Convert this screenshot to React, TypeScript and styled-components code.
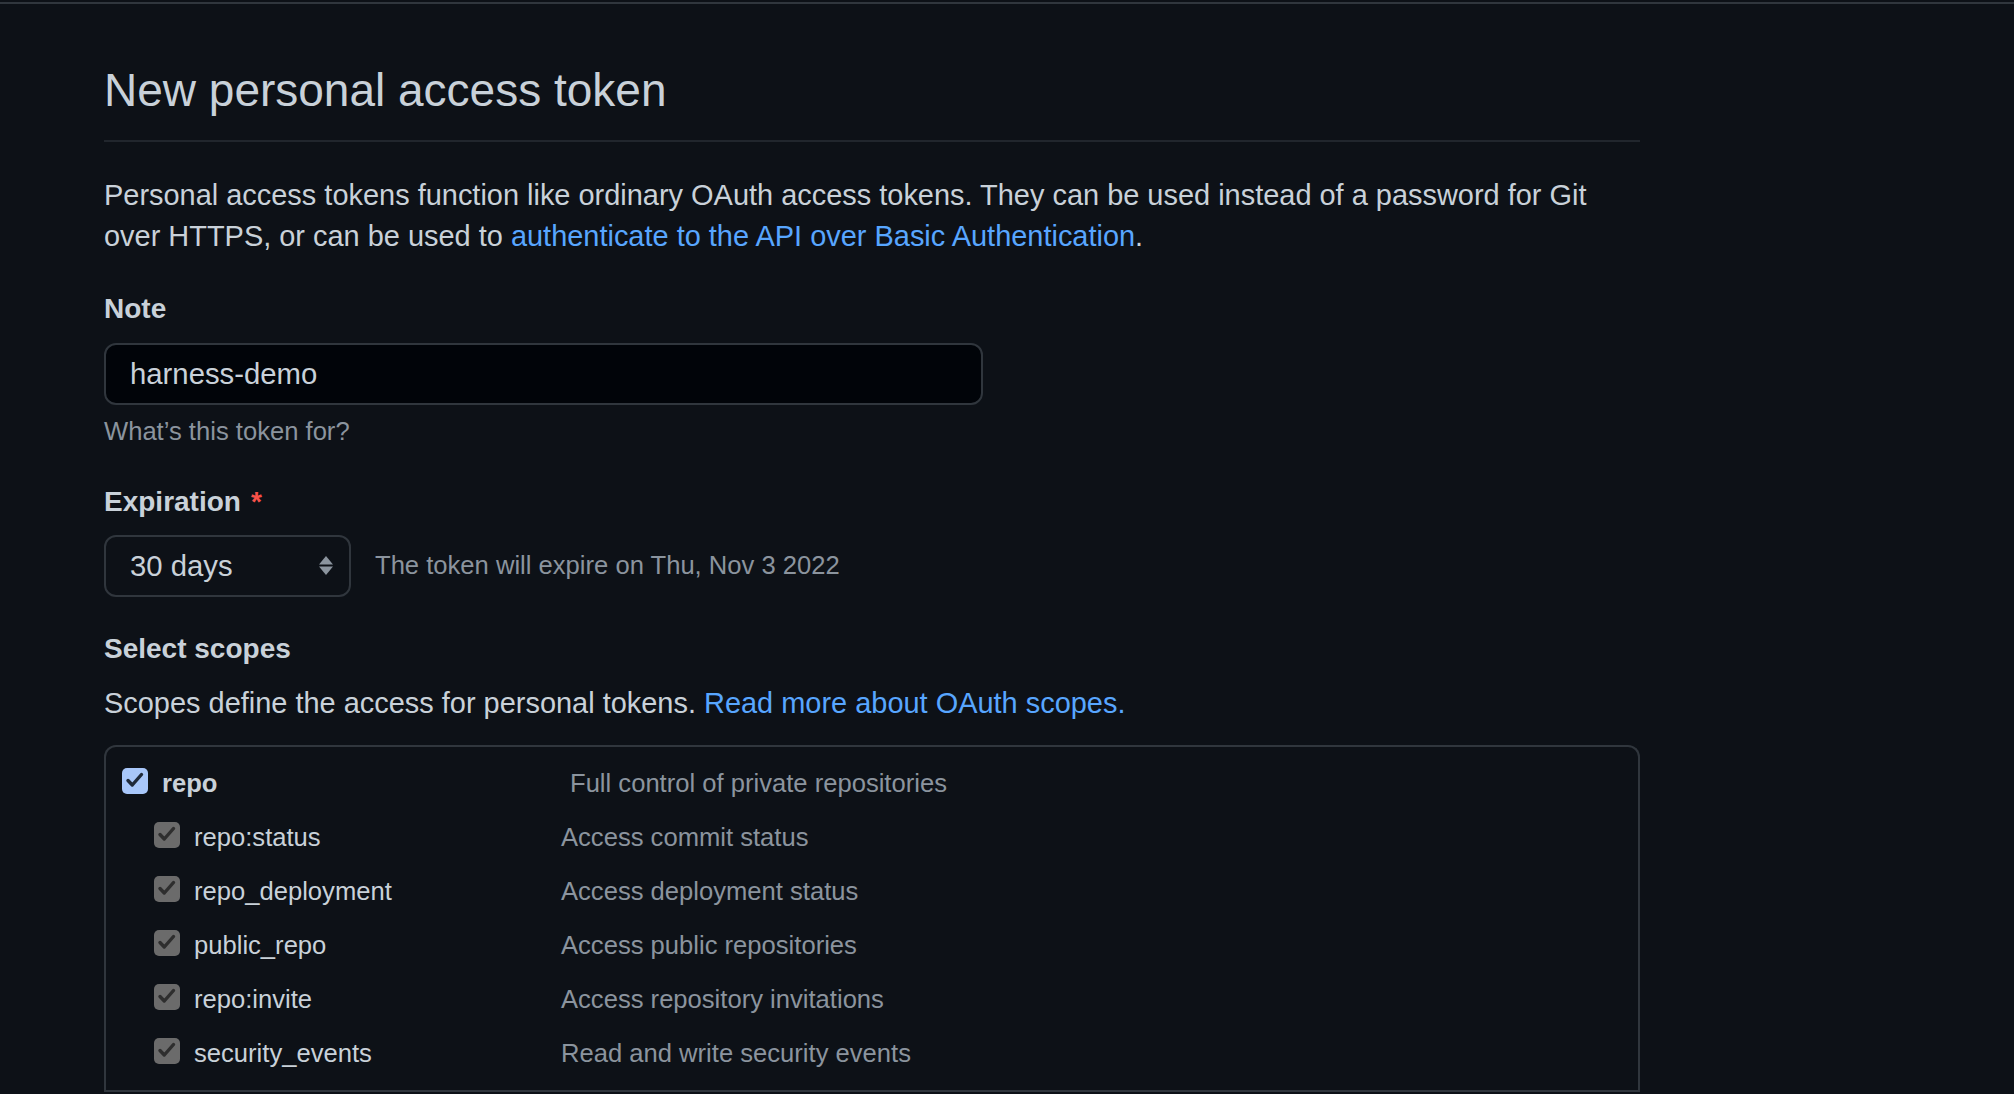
import React, { FC } from "react";
import styled, { createGlobalStyle } from "styled-components";

type Scope = {
  name: string;
  description: string;
  nested?: boolean;
};

const scopes: Scope[] = [
  { name: "repo", description: "Full control of private repositories" },
  { name: "repo:status", description: "Access commit status", nested: true },
  { name: "repo_deployment", description: "Access deployment status", nested: true },
  { name: "public_repo", description: "Access public repositories", nested: true },
  { name: "repo:invite", description: "Access repository invitations", nested: true },
  { name: "security_events", description: "Read and write security events", nested: true }
];

const GlobalStyle = createGlobalStyle`
  html, body {
    margin: 0;
    padding: 0;
    background: #0d1117;
  }
  body {
    font-family: "Liberation Sans", Arial, sans-serif;
    color: #c9d1d9;
  }
`;

const Page = styled.div`
  min-height: 1094px;
  background: #0d1117;
  overflow: hidden;
`;

const TopRule = styled.div`
  height: 2px;
  margin-top: 2px;
  background: #30363d;
`;

const Container = styled.main`
  width: 1536px;
  margin-left: 104px;
`;

const Subhead = styled.div`
  padding-top: 58px;
  padding-bottom: 20px;
  border-bottom: 2px solid #21262d;
`;

const Heading = styled.h1`
  margin: 0;
  font-size: 46px;
  font-weight: 400;
  line-height: 57.5px;
  color: #c9d1d9;
`;

const Lead = styled.p<{ $gap: number }>`
  margin: ${p => p.$gap}px 0 0;
  font-size: 28.95px;
  line-height: 41.7px;
  color: #c9d1d9;
`;

const Link = styled.span`
  color: #58a6ff;
`;

const Label = styled.div<{ $gap?: number }>`
  margin-top: ${p => p.$gap ?? 31}px;
  font-size: 28px;
  font-weight: 700;
  line-height: 41px;
  color: #c9d1d9;
`;

const Required = styled.span`
  margin-left: 10px;
  color: #f85149;
`;

const TextInput = styled.div`
  box-sizing: border-box;
  display: flex;
  align-items: center;
  width: 879px;
  height: 62px;
  margin-top: 14px;
  padding-left: 24px;
  border: 2px solid #30363d;
  border-radius: 12px;
  background: #010409;
  font-size: 29.3px;
  color: #c9d1d9;
`;

const Hint = styled.div`
  margin-top: 7px;
  font-size: 25.6px;
  line-height: 38px;
  color: #8b949e;
`;

const ExpirationRow = styled.div`
  display: flex;
  align-items: center;
  gap: 24px;
  margin-top: 13px;
`;

const SelectBox = styled.div`
  box-sizing: border-box;
  display: flex;
  align-items: center;
  justify-content: space-between;
  width: 247px;
  height: 62px;
  padding: 0 15px 0 24px;
  border: 2px solid #30363d;
  border-radius: 12px;
  background: #0d1117;
  font-size: 29.3px;
  color: #c9d1d9;
`;

const Note = styled.span`
  font-size: 25.6px;
  color: #8b949e;
`;

const ScopeBox = styled.div`
  box-sizing: border-box;
  margin-top: 20px;
  border: 2px solid #30363d;
  border-bottom: none;
  border-radius: 12px 12px 0 0;
`;

const ScopeGroup = styled.div`
  padding: 10px 0 9px;
  border-bottom: 2px solid #30363d;
`;

const ScopeRow = styled.div<{ $nested?: boolean }>`
  display: flex;
  align-items: center;
  height: 54px;
  padding-left: ${p => (p.$nested ? 48 : 16)}px;
`;

const Check = styled.span<{ $nested?: boolean }>`
  box-sizing: border-box;
  display: flex;
  align-items: center;
  justify-content: center;
  flex: none;
  width: 26px;
  height: 26px;
  margin: 0 14px 6px 0;
  border-radius: 5px;
  background: ${p => (p.$nested ? "#6b6b6b" : "#a8c7fa")};
`;

const ScopeName = styled.span<{ $nested?: boolean }>`
  flex: none;
  width: ${p => (p.$nested ? 367 : 408)}px;
  font-size: 25.6px;
  font-weight: ${p => (p.$nested ? 400 : 700)};
  color: #c9d1d9;
`;

const ScopeDescription = styled.span`
  font-size: 25.6px;
  color: #8b949e;
`;

const CheckMark: FC<{ color: string }> = ({ color }) => (
  <svg width="26" height="26" viewBox="0 0 26 26">
    <path d="M6 12.5 L10.3 17 L19.5 6.5" fill="none" stroke={color} strokeWidth="3.4" strokeLinecap="round" strokeLinejoin="round" />
  </svg>
);

const SelectArrows: FC = () => (
  <svg width="16" height="22" viewBox="0 0 16 22">
    <path d="M8 1 L15 9.5 L1 9.5 Z" fill="#8b949e" />
    <path d="M8 20 L15 11.5 L1 11.5 Z" fill="#8b949e" />
  </svg>
);

const App: FC = () => {
  const renderScope = (scope: Scope, key: number) => {
    return (
      <ScopeRow key={key} $nested={scope.nested}>
        <Check $nested={scope.nested}>
          <CheckMark color={scope.nested ? "#2e2e2e" : "#1f2a3a"} />
        </Check>
        <ScopeName $nested={scope.nested}>{scope.name}</ScopeName>
        <ScopeDescription>{scope.description}</ScopeDescription>
      </ScopeRow>
    );
  };

  return (
    <>
      <GlobalStyle />
      <Page>
        <TopRule />
        <Container>
          <Subhead>
            <Heading>New personal access token</Heading>
          </Subhead>
          <Lead $gap={33}>
            Personal access tokens function like ordinary OAuth access tokens. They can be used instead of a password for
            Git over HTTPS, or can be used to <Link>authenticate to the API over Basic Authentication</Link>.
          </Lead>

          <Label $gap={30}>Note</Label>
          <TextInput>harness-demo</TextInput>
          <Hint>What’s this token for?</Hint>

          <Label>
            Expiration<Required>*</Required>
          </Label>
          <ExpirationRow>
            <SelectBox>
              <span>30 days</span>
              <SelectArrows />
            </SelectBox>
            <Note>The token will expire on Thu, Nov 3 2022</Note>
          </ExpirationRow>

          <Label>Select scopes</Label>
          <Lead $gap={14}>
            Scopes define the access for personal tokens. <Link>Read more about OAuth scopes.</Link>
          </Lead>

          <ScopeBox>
            <ScopeGroup>{scopes.map(renderScope)}</ScopeGroup>
          </ScopeBox>
        </Container>
      </Page>
    </>
  );
};

export default App;
